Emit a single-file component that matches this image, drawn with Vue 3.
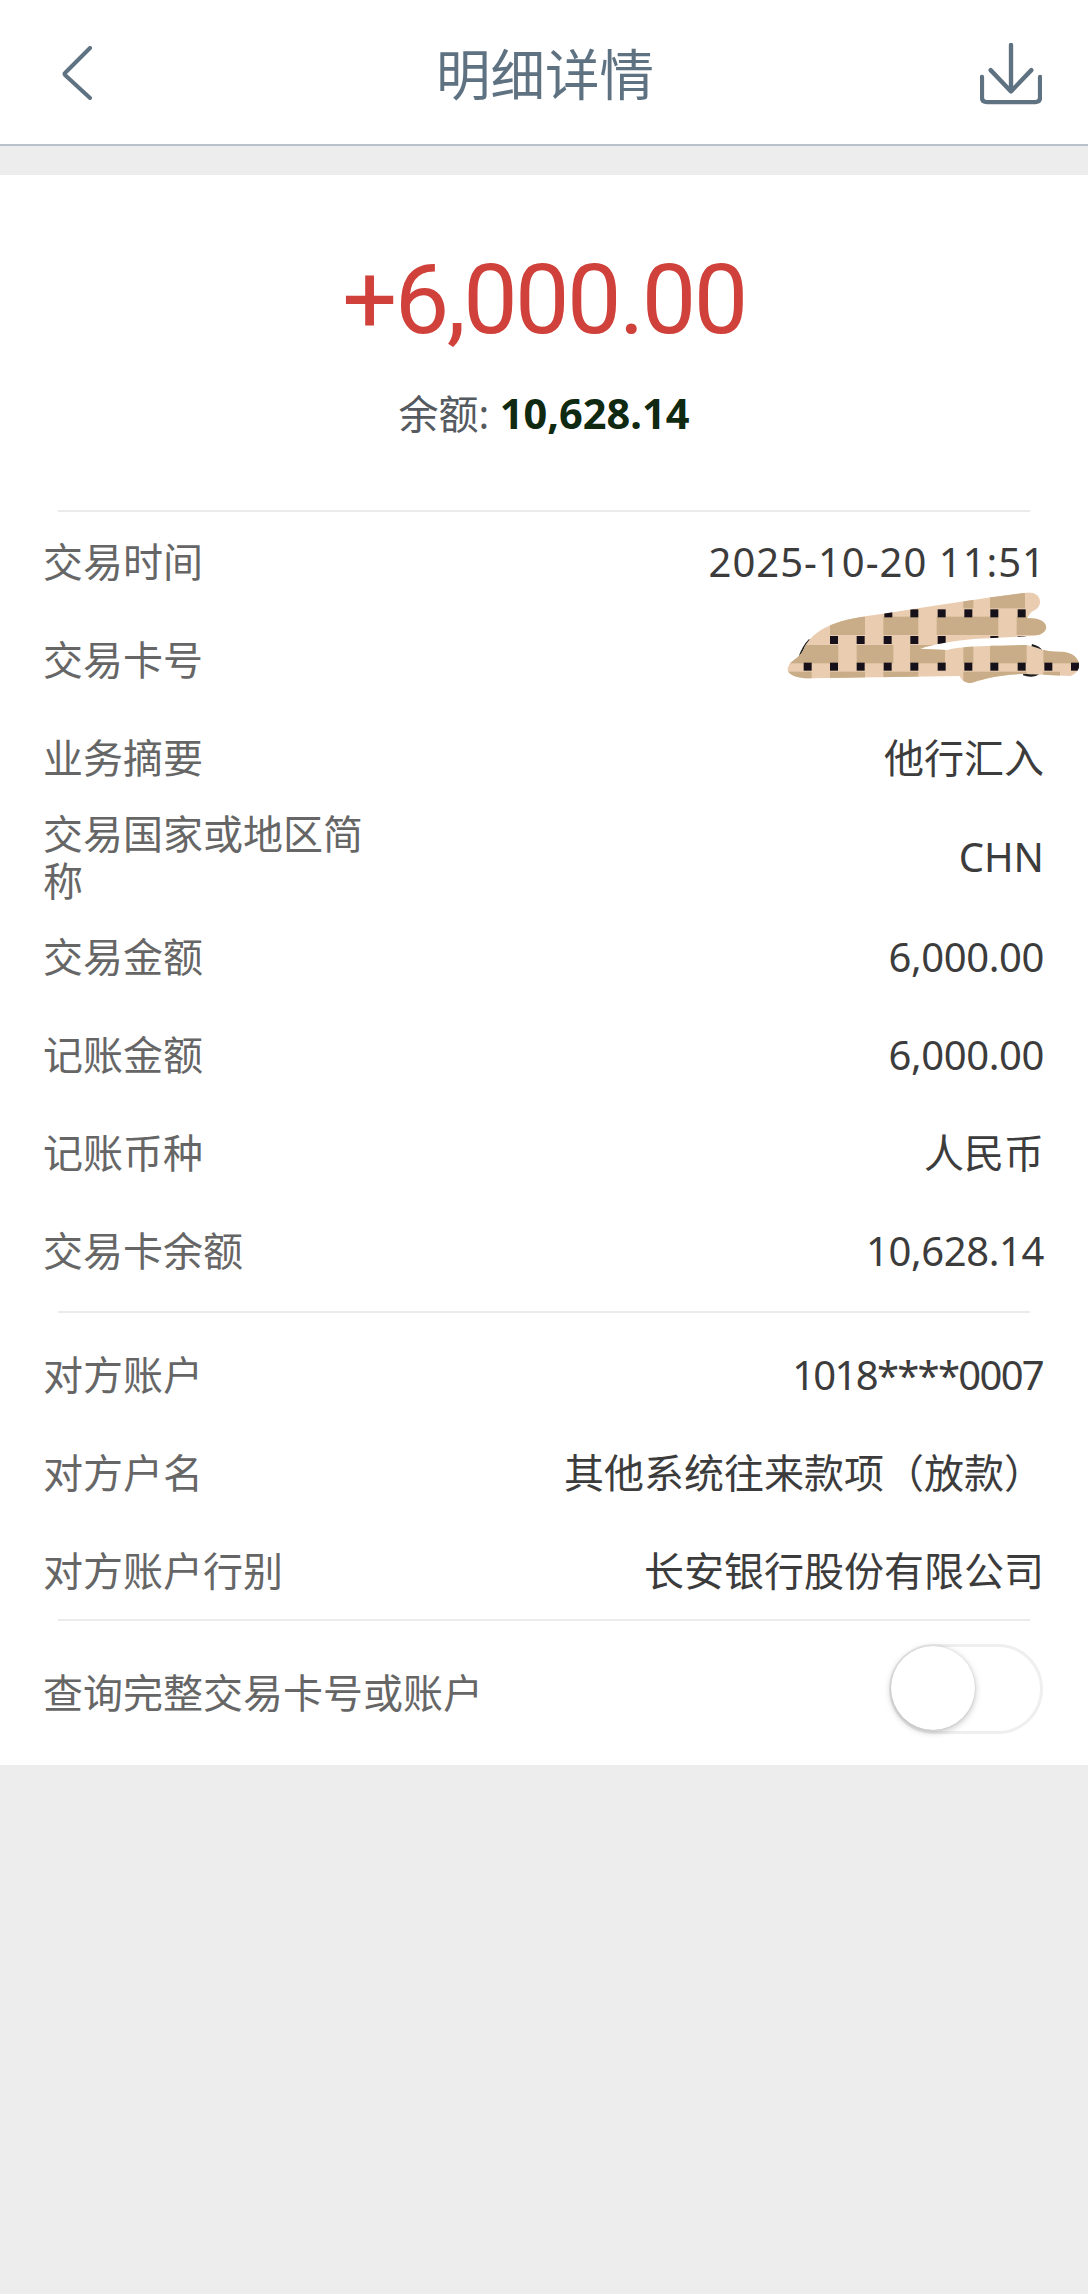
<script setup>
const rowsA = [
  { label: '交易时间', value: '2025-10-20 11:51', kind: 'date' },
  { label: '交易卡号', value: '', mask: true },
  { label: '业务摘要', value: '他行汇入' },
  { label: '交易国家或地区简称', value: 'CHN', kind: 'tall' },
  { label: '交易金额', value: '6,000.00', kind: 'num' },
  { label: '记账金额', value: '6,000.00', kind: 'num' },
  { label: '记账币种', value: '人民币' },
  { label: '交易卡余额', value: '10,628.14', kind: 'num' }
]
const rowsB = [
  { label: '对方账户', value: '1018****0007', kind: 'account' },
  { label: '对方户名', value: '其他系统往来款项（放款）' },
  { label: '对方账户行别', value: '长安银行股份有限公司' }
]
const darkBands = [
  [60, 55, [[610, 640], [690, 795]]],
  [140, 55, [[210, 315], [370, 475], [530, 715], [770, 880]]],
  [225, 55, [[90, 235], [290, 400], [450, 555], [610, 640], [690, 800], [850, 970]]],
  [305, 45, [[80, 155], [210, 315], [370, 475], [610, 800], [850, 900]]]
].flatMap(([y, h, spans]) => spans.map(([a, b]) => ({ x: a, y, w: b - a, h })))
const dots = [
  [130, [385, 463, 545, 625, 703, 785]],
  [210, [222, 302, 383, 463, 545, 703, 785]],
  [290, [143, 222, 302, 383, 463, 545, 625, 703, 785, 865, 945]]
].flatMap(([y, xs]) => xs.map((x) => ({ x: x - 12, y: y - 12 })))
</script>

<template>
  <div class="page">
    <header class="nav">
      <svg class="back" width="30" height="54" viewBox="0 0 30 54" fill="none">
        <path d="M28 2 L3 27 Q2 27.5 3 29 L28 52" />
      </svg>
      <h1 class="title">明细详情</h1>
      <svg class="save" width="62" height="62" viewBox="0 0 64 64" fill="none">
        <path d="M32 2 V49 M11 28 L32 50 L53 28" />
        <path d="M2 35 V56 Q2 61 7 61 H57 Q62 61 62 56 V35" />
      </svg>
    </header>

    <main class="card">
      <section class="hero">
        <div class="amount">+6,000.00</div>
        <div class="balance">余额: <b>10,628.14</b></div>
      </section>

      <div class="rule"></div>
      <section class="list list-a">
        <div v-for="row in rowsA" :key="row.label" class="row" :class="row.kind">
          <span class="label">{{ row.label }}</span>
          <span class="value">{{ row.value }}</span>
          <svg v-if="row.mask" class="mask" width="328" height="130" viewBox="0 0 984 390">
            <defs>
              <clipPath id="scribble">
                <path d="M85 290 C90 270 118 268 130 240 C150 190 205 155 320 138 C450 120 650 85 800 68 C845 62 855 112 815 125 L800 145 C870 138 880 195 815 198 L640 207 C590 212 520 222 480 236 L560 240 C590 232 620 228 800 225 C835 232 850 246 900 245 C965 245 975 305 930 318 L800 312 C720 312 660 330 630 340 C605 335 600 322 600 318 L150 325 C95 325 75 305 85 290 Z" />
              </clipPath>
            </defs>
            <path class="ink" d="M150 210 C135 225 125 245 118 265 M815 226 C830 230 840 236 845 245 M790 312 C805 318 825 318 838 308" />
            <g clip-path="url(#scribble)">
              <rect class="weave-light" x="0" y="0" width="984" height="390" />
              <rect v-for="(b, i) in darkBands" :key="i" class="weave-dark" :x="b.x" :y="b.y" :width="b.w" :height="b.h" />
              <rect v-for="(d, i) in dots" :key="i" class="weave-dot" :x="d.x" :y="d.y" width="24" height="24" />
            </g>
          </svg>
        </div>
      </section>

      <div class="rule"></div>
      <section class="list list-b">
        <div v-for="row in rowsB" :key="row.label" class="row" :class="row.kind">
          <span class="label">{{ row.label }}</span>
          <span class="value">{{ row.value }}</span>
        </div>
      </section>

      <div class="rule"></div>
      <section class="query">
        <span class="label wide">查询完整交易卡号或账户</span>
        <div class="toggle"><div class="knob"></div></div>
      </section>
    </main>
  </div>
</template>

<style>
html, body { margin: 0; background: #ededed; }
</style>

<style scoped>
.page {
  width: 1088px;
  min-height: 2294px;
  background: #ededed;
  font-family: "Noto Sans", "Noto Sans CJK SC", sans-serif;
}
.nav {
  height: 144px;
  box-sizing: content-box;
  background: #fff;
  border-bottom: 2px solid #b9c2cc;
  display: flex;
  align-items: center;
  justify-content: space-between;
  padding: 0 46px 0 62px;
}
.title {
  margin: 0;
  font-size: 54.5px;
  font-weight: 400;
  color: #5f7282;
  line-height: 1;
  padding: 5px 0 0 18px;
}
.back, .save { flex: none; }
.back { margin-top: 2px; }
.save { margin-top: 4px; }
.back path, .save path {
  stroke: #5f7282;
  stroke-width: 4px;
  stroke-linecap: round;
  stroke-linejoin: round;
}
.save path { stroke-width: 4.5px; }
.card {
  margin-top: 29px;
  background: #fff;
  padding-bottom: 1px;
}
.hero {
  height: 335px;
  display: flex;
  flex-direction: column;
  align-items: center;
}
.amount {
  margin-top: 63px;
  font-family: "Roboto", "Noto Sans", sans-serif;
  font-size: 97px;
  letter-spacing: -2.6px;
  line-height: 124px;
  color: #cf413a;
}
.balance {
  margin-top: 25px;
  font-size: 40px;
  line-height: 52px;
  color: #555a60;
}
.balance b {
  font-size: 41.5px;
  font-weight: 700;
  color: #0f2a10;
}
.rule {
  height: 2px;
  margin: 0 58px;
  background: #ebebeb;
}
.list-a { padding: 0 0 12px; }
.list-b { padding: 12px 0 0; }
.row {
  position: relative;
  height: 98px;
  padding: 0 44px 0 43px;
  display: flex;
  align-items: center;
  justify-content: space-between;
}
.row.tall { height: 101px; }
.label {
  max-width: 330px;
  font-size: 40px;
  line-height: 47px;
  color: #666;
}
.label.wide { max-width: none; }
.value {
  font-size: 40px;
  line-height: 47px;
  color: #3c3c3c;
  white-space: nowrap;
}
.date .value { letter-spacing: 1px; margin-right: -2px; }
.num .value { letter-spacing: -0.4px; }
.account .value { letter-spacing: -1.7px; margin-right: 1px; }
.mask {
  position: absolute;
  left: 760px;
  top: -40px;
}
.ink {
  fill: none;
  stroke: #222;
  stroke-width: 8px;
}
.weave-light { fill: #eacdb0; }
.weave-dark { fill: #c9ad88; }
.weave-dot { fill: #16101a; }
.query {
  height: 143px;
  padding: 0 44px 0 43px;
  display: flex;
  align-items: center;
  justify-content: space-between;
}
.toggle {
  width: 154px;
  height: 90px;
  box-sizing: border-box;
  border: 3px solid #efefef;
  border-radius: 45px;
  background: #fff;
  position: relative;
  margin-top: -8px;
  margin-right: 1px;
}
.knob {
  position: absolute;
  left: -1px;
  top: -1px;
  width: 84px;
  height: 84px;
  border-radius: 50%;
  background: #fff;
  box-shadow: 0 2px 7px rgba(0, 0, 0, 0.26), 0 0 2px rgba(0, 0, 0, 0.12);
}
</style>
